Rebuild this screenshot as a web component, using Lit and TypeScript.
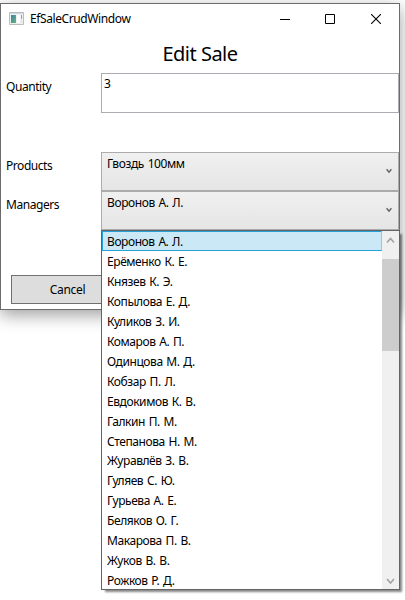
import { LitElement, html, css } from "lit";
import { customElement, property } from "lit/decorators.js";

@customElement("combo-field")
class ComboField extends LitElement {
  @property() value = "";
  static styles = css`
    :host { display: flex; box-sizing: border-box; height: 39px; padding: 3px 6px 0 5px;
      border: 1px solid #acacac; background: linear-gradient(#f0f0f0, #e5e5e5); letter-spacing: -.4px; word-spacing: 1px; }
    span { flex: 1; line-height: 16px; }
    svg { margin-top: 12px; }
  `;
  render() {
    return html`<span>${this.value}</span>
      <svg width="6" height="6" viewBox="0 0 6 6"><path d="M.6 1.2 3 4.1 5.4 1.2" fill="none" stroke="#606060" stroke-width="1.4"/></svg>`;
  }
}

@customElement("app-root")
export class AppRoot extends LitElement {
  private managers = ["Воронов А. Л.", "Ерёменко К. Е.", "Князев К. Э.", "Копылова Е. Д.", "Куликов З. И.",
    "Комаров А. П.", "Одинцова М. Д.", "Кобзар П. Л.", "Евдокимов К. В.", "Галкин П. М.", "Степанова Н. М.",
    "Журавлёв З. В.", "Гуляев С. Ю.", "Гурьева А. Е.", "Беляков О. Г.", "Макарова П. В.", "Жуков В. В.", "Рожков Р. Д."];

  static styles = css`
    :host { display: block; position: relative; box-sizing: border-box; width: 405px; height: 600px;
      padding-top: 3px; overflow: hidden; background: #fff; color: #000;
      font: 12px/16px "Noto Sans", "Open Sans", sans-serif; letter-spacing: -0.4px; white-space: nowrap; }
    .window { box-sizing: border-box; width: 400px; height: 307px; border: 1px solid #6b6b6b; background: #fff;
      box-shadow: 0 5px 16px rgba(0,0,0,.38); display: flex; flex-direction: column; }
    .titlebar { display: flex; align-items: center; height: 29px; padding-left: 8px; }
    .title { flex: 1; margin-left: 6px; }
    .controls { display: flex; gap: 35px; padding-right: 18px; }
    .close { margin-left: 1px; }
    h1 { margin: 7px 0 0; height: 33px; font-size: 20px; line-height: 27px; font-weight: 400; text-align: center; letter-spacing: -.5px; }
    .row { display: grid; grid-template-columns: 95px 298px; padding-left: 5px; height: 39px; }
    .row.quantity { height: 79px; }
    .label { padding-top: 6px; letter-spacing: -.45px; }
    .input { box-sizing: border-box; height: 40px; border: 1px solid #abadb3; padding: 2px; line-height: 15px; }
    .cancel { box-sizing: border-box; width: 113px; height: 29px; margin: 45px 0 0 10px;
      border: 1px solid #707070; background: #ddd; text-align: center; line-height: 27px; letter-spacing: -.3px; }
    .popup { position: absolute; left: 101px; top: 230px; box-sizing: border-box; width: 299px; height: 360px;
      border: 1px solid #646464; background: #fff; display: flex; box-shadow: 3px 3px 2px -1px rgba(0,0,0,.48); }
    .list { flex: 1; overflow: hidden; }
    .item { box-sizing: border-box; height: 19.96px; padding: 2px 5px 0 4px; border: 1px solid transparent; line-height: 16px;
      letter-spacing: -.42px; word-spacing: 1px; }
    .item.selected { background: #cbe8f6; border-color: #26a0da; border-right-color: #8fcbe6; }
    .scroll { width: 17px; background: #f0f0f0; display: flex; flex-direction: column; justify-content: space-between; }
    .arrow { height: 17px; display: block; }
    .thumb { height: 92px; margin-top: 11px; background: #cdcdcd; }
    .space { flex: 1; }
  `;

  render() {
    return html`
      <div class="window">
        <div class="titlebar">
          <svg width="15" height="13" viewBox="0 0 15 13">
            <defs><linearGradient id="pane" x2="1" y2="1"><stop stop-color="#427ea5"/><stop offset="1" stop-color="#64b77d"/></linearGradient></defs>
            <path d="M.5.5h14v12H.5z" fill="#eef1f2" stroke="#b9bdc1"/>
            <path d="M1 1.5h13" stroke="#d5d8db"/>
            <path d="M2 3h5v8H2z" fill="url(#pane)"/><path d="M8 3h3v8H8z" fill="#fff"/>
            <path d="M12 3h1v4h-1z" fill="#75b899"/><path d="M12 8h1v3h-1z" fill="#dce2e2"/>
          </svg>
          <span class="title">EfSaleCrudWindow</span>
          <div class="controls">
            <svg width="10" height="10"><path d="M0 5.5h10" stroke="#000"/></svg>
            <svg width="10" height="10"><path d="M.5.5h9v9h-9z" fill="none" stroke="#000"/></svg>
            <svg class="close" width="10" height="10"><path d="m0 0 10 10M10 0 0 10" stroke="#000" stroke-width="1.1"/></svg>
          </div>
        </div>
        <h1>Edit Sale</h1>
        <div class="row quantity"><span class="label">Quantity</span><div class="input">3</div></div>
        <div class="row"><span class="label">Products</span><combo-field value="Гвоздь 100мм"></combo-field></div>
        <div class="row"><span class="label">Managers</span><combo-field value="Воронов А. Л."></combo-field></div>
        <div class="cancel">Cancel</div>
      </div>
      <div class="popup">
        <div class="list">${this.managers.map((m, i) => html`<div class="item ${i === 0 ? "selected" : ""}">${m}</div>`)}</div>
        <div class="scroll">
          <svg class="arrow" width="17" height="17"><path d="m5 11.5 3.5-4 3.5 4" fill="none" stroke="#a0a0a0" stroke-width="1.5"/></svg>
          <div class="thumb"></div><div class="space"></div>
          <svg class="arrow" width="17" height="17"><path d="m5 7 3.5 4 3.5-4" fill="none" stroke="#a0a0a0" stroke-width="1.5"/></svg>
        </div>
      </div>`;
  }
}
